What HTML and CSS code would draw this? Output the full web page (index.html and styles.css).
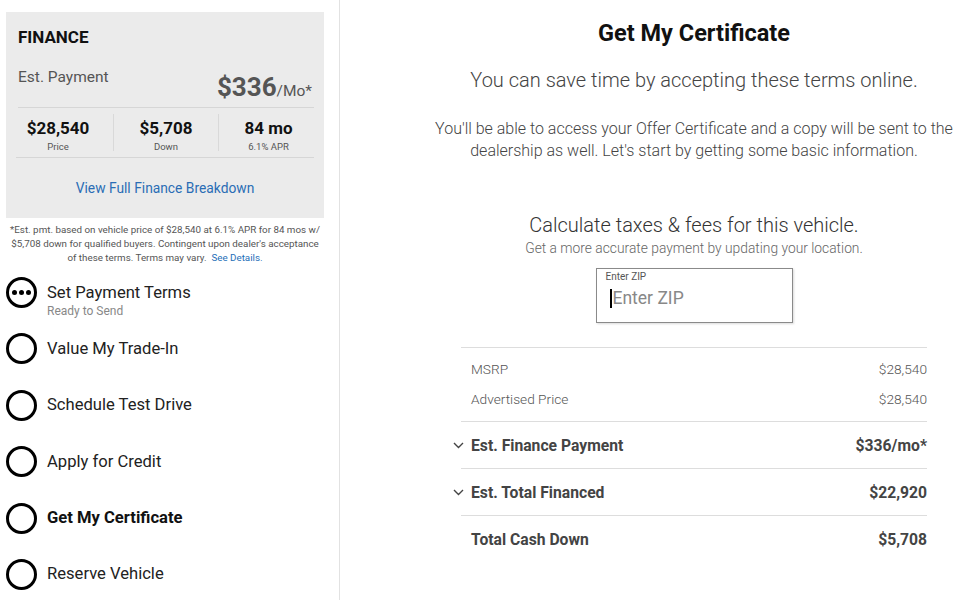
FILE: index.html
```html
<!DOCTYPE html>
<html>
<head>
<meta charset="utf-8">
<link rel="stylesheet" href="styles.css">
</head>
<body>
<div class="page">
  <aside class="side">
    <section class="card">
      <h2 class="card-title">FINANCE</h2>
      <div class="pay-row">
        <span class="pay-label">Est. Payment</span>
        <span class="pay-value"><b>$336</b><small>/Mo*</small></span>
      </div>
      <div class="stats">
        <div class="stat s1"><div class="stat-val">$28,540</div><div class="stat-lbl">Price</div></div>
        <div class="stat s2"><div class="stat-val">$5,708</div><div class="stat-lbl">Down</div></div>
        <div class="stat s3"><div class="stat-val">84 mo</div><div class="stat-lbl">6.1% APR</div></div>
      </div>
      <a class="breakdown">View Full Finance Breakdown</a>
    </section>
    <p class="footnote">*Est. pmt. based on vehicle price of $28,540 at 6.1% APR for 84 mos w/ $5,708 down for qualified buyers. Contingent upon dealer's acceptance of these terms. Terms may vary. &nbsp;<a>See Details.</a></p>
    <ul class="steps">
      <li class="step">
        <span class="ring dots"><i></i><i></i><i></i></span>
        <div><div class="step-name">Set Payment Terms</div><div class="step-sub">Ready to Send</div></div>
      </li>
      <li class="step"><span class="ring"></span><div class="step-name">Value My Trade-In</div></li>
      <li class="step"><span class="ring"></span><div class="step-name">Schedule Test Drive</div></li>
      <li class="step"><span class="ring"></span><div class="step-name">Apply for Credit</div></li>
      <li class="step active"><span class="ring"></span><div class="step-name">Get My Certificate</div></li>
      <li class="step"><span class="ring"></span><div class="step-name">Reserve Vehicle</div></li>
    </ul>
  </aside>
  <main class="main">
    <h1 class="title">Get My Certificate</h1>
    <p class="lead">You can save time by accepting these terms online.</p>
    <p class="desc">You'll be able to access your Offer Certificate and a copy will be sent to the dealership as well. Let's start by getting some basic information.</p>
    <h3 class="calc">Calculate taxes &amp; fees for this vehicle.</h3>
    <p class="calc-sub">Get a more accurate payment by updating your location.</p>
    <div class="zip">
      <div class="zip-label">Enter ZIP</div>
      <div class="zip-input"><span class="caret"></span>Enter ZIP</div>
    </div>
    <div class="table">
      <div class="group">
        <div class="row small"><span>MSRP</span><span>$28,540</span></div>
        <div class="row small"><span>Advertised Price</span><span>$28,540</span></div>
      </div>
      <div class="row big"><span class="chev"><svg width="11" height="7" viewBox="0 0 11 7"><path d="M1 1l4.5 4.5L10 1" fill="none" stroke="#444" stroke-width="1.4"/></svg></span><span>Est. Finance Payment</span><span>$336/mo*</span></div>
      <div class="row big"><span class="chev"><svg width="11" height="7" viewBox="0 0 11 7"><path d="M1 1l4.5 4.5L10 1" fill="none" stroke="#444" stroke-width="1.4"/></svg></span><span>Est. Total Financed</span><span>$22,920</span></div>
      <div class="row big"><span>Total Cash Down</span><span>$5,708</span></div>
    </div>
  </main>
</div>
</body>
</html>
```
FILE: styles.css
```css
* { box-sizing: border-box; }
html, body { margin: 0; padding: 0; background: #fff; }
body { font-family: Roboto, "Liberation Sans", sans-serif; color: #222; width: 969px; height: 600px; overflow: hidden; }
.page { display: flex; height: 600px; }
.side { width: 340px; border-right: 1px solid #e2e2e2; padding: 12px 0 0 6px; flex: none; }
.card { width: 318px; height: 206px; background: #ebebeb; padding: 15px 10px 0 10px; }
.card-title { margin: 0 0 0 2px; font-size: 17px; font-weight: 700; color: #111; line-height: 20px; }
.pay-row { display: flex; justify-content: space-between; align-items: flex-start; margin: 10px 0 0 2px; padding-right: 2px; height: 51px; border-bottom: 1px solid #d6d6d6; }
.pay-label { font-size: 15.5px; color: #555; line-height: 18px; margin-top: 11px; }
.pay-value { color: #555; margin-top: 16px; line-height: 28px; }
.pay-value b { font-size: 26px; font-weight: 700; }
.pay-value small { font-size: 15.5px; }
.stats { display: flex; border-bottom: 1px solid #d6d6d6; height: 50px; }
.stat { text-align: center; border-left: 1px solid #d9d9d9; height: 37px; margin-top: 6px; padding-top: 3px; }
.s1 { width: 97px; border-left: none; padding-right: 13px; }
.s2 { width: 105px; }
.s3 { width: 96px; padding-left: 4px; }
.stat-val { font-size: 17px; font-weight: 700; color: #111; line-height: 22px; }
.stat-lbl { font-size: 9.5px; color: #555; line-height: 12px; margin-top: 2px; }
.breakdown { display: block; text-align: center; color: #2a6db5; font-size: 13.8px; margin-top: 22px; line-height: 16px; }
.footnote { margin: 5px 0 0 0; width: 318px; text-align: center; font-size: 9.8px; line-height: 14px; color: #555; }
.footnote a { color: #1f6fb8; }
.steps { list-style: none; margin: 12px 0 0 0; padding: 0; }
.step { display: flex; align-items: flex-start; height: 56.4px; }
.ring { width: 31px; height: 31px; border: 3px solid #000; border-radius: 50%; flex: none; margin-right: 10px; display: flex; align-items: center; justify-content: center; gap: 2px; }
.dots i { width: 5px; height: 5px; border-radius: 50%; background: #000; display: block; }
.step-name { font-size: 16.6px; color: #222; line-height: 20px; margin-top: 5.5px; }
.step-sub { font-size: 12px; color: #888; line-height: 12px; margin-top: 2px; }
.active .step-name { font-weight: 700; color: #111; }
.main { flex: 1; padding: 19px 1px 0 80px; text-align: center; }
.title { margin: 0; font-size: 23.5px; font-weight: 700; color: #111; line-height: 28px; }
.lead { margin: 21px 0 0; font-size: 20px; color: #444; line-height: 24px; font-weight: 300; }
.desc { margin: 26px auto 0; max-width: 530px; font-size: 16px; color: #444; line-height: 22px; font-weight: 300; }
.calc { margin: 51px 0 0; font-size: 20px; font-weight: 300; color: #333; line-height: 24px; }
.calc-sub { margin: 2px 0 0; font-size: 13.8px; color: #666; line-height: 18px; font-weight: 300; }
.zip { width: 197px; height: 55px; margin: 11px auto 0; border: 1px solid #8a8a8a; box-shadow: 1px 1px 2px rgba(0,0,0,0.15); text-align: left; padding: 2px 0 0 9px; }
.zip-label { font-size: 10px; color: #555; line-height: 12px; }
.zip-input { font-size: 17.5px; color: #888; line-height: 22px; margin: 4px 0 0 4px; display: flex; align-items: center; }
.caret { width: 2px; height: 19px; background: #000; margin-right: 1px; }
.table { width: 466px; margin: 24px auto 0; border-top: 1px solid #ddd; text-align: left; }
.group { padding: 6px 0 7px; border-bottom: 1px solid #ddd; }
.row { display: flex; align-items: center; position: relative; padding: 0 0 0 10px; }
.row span:last-child { margin-left: auto; }
.row.small { font-size: 13.7px; color: #555; height: 30px; font-weight: 300; }
.row.big { font-size: 15.7px; font-weight: 700; color: #444; height: 47px; border-bottom: 1px solid #ddd; }
.row.big:last-child { border-bottom: none; }
.chev { position: absolute; left: -8px; top: 20px; line-height: 0; }
```
